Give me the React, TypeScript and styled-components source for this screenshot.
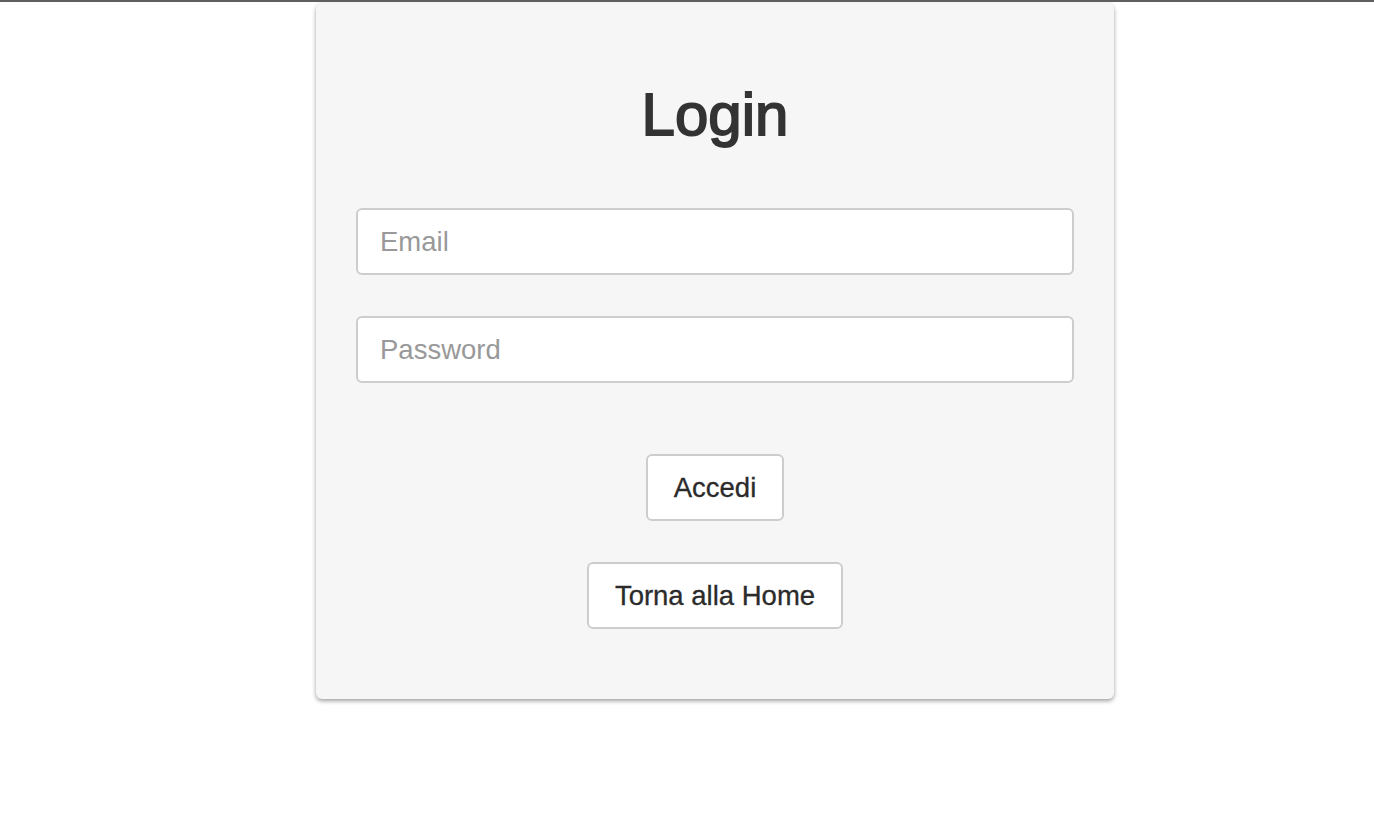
import styled, { createGlobalStyle } from "styled-components";

const GlobalStyle = createGlobalStyle`
  * {
    box-sizing: border-box;
  }
  body {
    margin: 0;
    background: #fff;
    border-top: 2px solid #5f5f5f;
    font-family: "Liberation Sans", Arial, sans-serif;
  }
`;

const Page = styled.main`
  min-height: 812px;
`;

const Card = styled.form`
  width: 798px;
  margin: 1px 0 0 316px;
  padding: 40px 40px 70px;
  background: #f6f6f6;
  border-radius: 6px;
  box-shadow: 0 2px 4px rgba(0, 0, 0, 0.38);
  display: flex;
  flex-direction: column;
  align-items: center;
`;

const Title = styled.h1`
  margin: 39px 0 60px;
  font-size: 60px;
  line-height: 66px;
  font-weight: 400;
  color: #333;
  -webkit-text-stroke: 1.8px #333;
`;

const Input = styled.input`
  width: 100%;
  height: 67px;
  margin-bottom: 41px;
  padding: 0 22px;
  border: 2px solid #cdcdcd;
  border-radius: 6px;
  background: #fff;
  font-family: inherit;
  font-size: 27.5px;
  color: #333;
  outline: none;

  &::placeholder {
    color: #999;
  }
  &:last-of-type {
    margin-bottom: 71px;
  }
`;

const Button = styled.button<{ $gap?: boolean }>`
  height: 67px;
  padding: 0 26px;
  margin-bottom: ${(p) => (p.$gap ? "41px" : "0")};
  border: 2px solid #cdcdcd;
  border-radius: 6px;
  background: #fff;
  font-family: inherit;
  font-size: 27.5px;
  color: #2b2b2b;
  -webkit-text-stroke: 0.3px #2b2b2b;
  cursor: pointer;
`;

export default function App() {
  return (
    <Page>
      <GlobalStyle />
      <Card onSubmit={(e) => e.preventDefault()}>
        <Title>Login</Title>
        <Input type="email" placeholder="Email" />
        <Input type="password" placeholder="Password" />
        <Button type="submit" $gap>
          Accedi
        </Button>
        <Button type="button">Torna alla Home</Button>
      </Card>
    </Page>
  );
}
